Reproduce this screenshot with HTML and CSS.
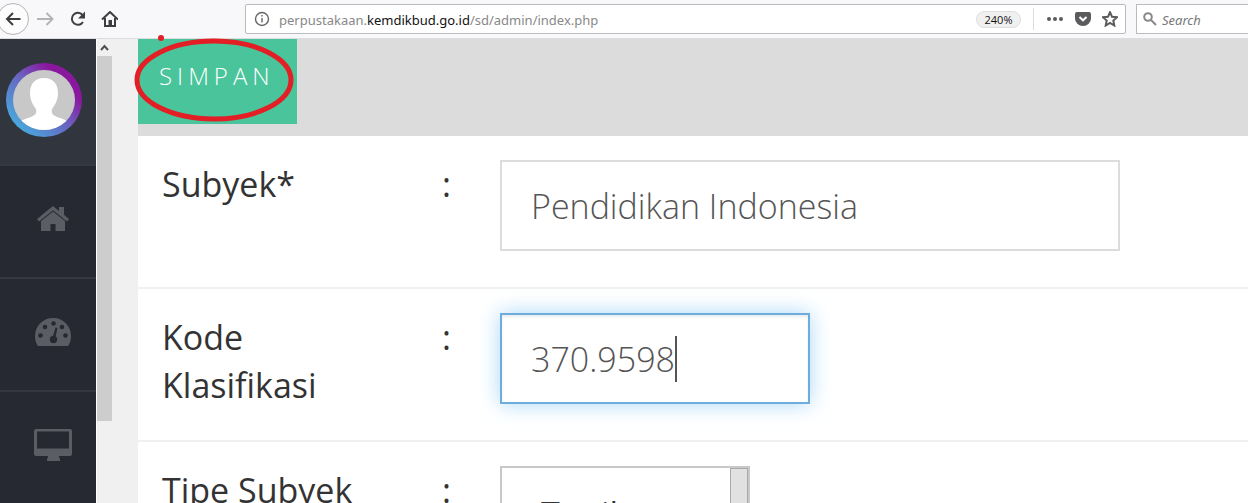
FILE: index.html
```html
<!DOCTYPE html>
<html lang="id">
<head>
<meta charset="utf-8">
<title>Perpustakaan – Subyek</title>
<link rel="stylesheet" href="styles.css">
</head>
<body>
<header class="browser">
  <nav class="nav-buttons" aria-label="Navigasi">
    <button class="nav-button back" aria-label="Back"><svg viewBox="0 0 16 16" width="16" height="16"><path d="M15.500 8H2M8 2L2 8l6 6"/></svg></button>
    <button class="nav-button forward" aria-label="Forward"><svg viewBox="0 0 18 16" width="18" height="16"><path d="M1 8h15M10.500 2l6 6-6 6"/></svg></button>
    <button class="nav-button" aria-label="Reload"><svg viewBox="0 0 16 16" width="16" height="16"><path d="M13.500 4A6 6 0 1 0 14 11"/><path class="solid" d="M16 0.500v7H9z"/></svg></button>
    <button class="nav-button" aria-label="Home"><svg viewBox="0 0 18 16" width="18" height="16"><path d="M2 8.500L10 1l8 7.500M5 7v8h10V7"/><path class="solid" d="M8.500 9h3.500v6H8.500z"/></svg></button>
  </nav>
  <div class="address">
    <svg class="info" viewBox="0 0 16 16" width="16" height="16"><circle cx="8" cy="8" r="6.500"/><path d="M8 7v4.500M8 4v1.600"/></svg>
    <div class="url" role="textbox" contenteditable="true" spellcheck="false" aria-label="Address">perpustakaan.<span class="domain">kemdikbud.go.id</span>/sd/admin/index.php</div>
    <button class="zoom-level">240%</button>
    <div class="page-actions">
      <button aria-label="Page actions"><svg viewBox="0 0 18 16" width="18" height="16"><circle cx="3" cy="8" r="2"/><circle cx="9" cy="8" r="2"/><circle cx="15" cy="8" r="2"/></svg></button>
      <button aria-label="Pocket"><svg viewBox="0 0 16 16" width="16" height="16"><path d="M2 1h12a2 2 0 0 1 2 2v4.500a8 7.500 0 0 1-16 0V3a2 2 0 0 1 2-2z"/><path class="notch" d="M4.500 6L8 9.300 11.500 6"/></svg></button>
      <button aria-label="Bookmark"><svg class="star" viewBox="0 0 16 16" width="16" height="16"><path d="M8 1.200l2 4.500 5 .5-3.700 3.300 1 5L8 12l-4.300 2.500 1-5L1 6.200l5-.5z"/></svg></button>
    </div>
  </div>
  <label class="search">
    <svg viewBox="0 0 14 14" width="14" height="14"><circle cx="5" cy="5" r="3.800"/><path d="M8 8l5 5"/></svg>
    <input type="search" placeholder="Search" aria-label="Search">
  </label>
</header>
<div class="page">
  <aside class="sidebar">
    <div class="profile">
      <div class="ring">
        <svg viewBox="0 0 62 60" width="62" height="60"><defs><clipPath id="face"><ellipse cx="31" cy="30" rx="31" ry="30"/></clipPath></defs><g clip-path="url(#face)"><path class="backdrop" d="M0 0h62v60H0z"/><path class="person" d="M31 8c10 0 14 7 14 15 0 7-3 12-6 16-1 5 1 6 5 8 6 2 9 3 11 5v12H7V52c2-2 5-3 11-5 4-2 6-3 5-8-3-4-6-9-6-16 0-8 4-15 14-15z"/></g></svg>
      </div>
    </div>
    <nav class="menu" aria-label="Menu">
      <a href="#" aria-label="Beranda"><svg viewBox="0 0 32 26" width="32" height="26"><path d="M16 5.500L4 15v10h9.500v-7h5v7H28V15z"/><path d="M16 0L0 13l2 2.500L16 4.300l14 11.200 2-2.500-5-4.200V1h-5v4z"/></svg></a>
      <a href="#" aria-label="Dasbor"><svg viewBox="0 0 36 28" width="36" height="28"><path d="M18 0a18 18 0 0 1 18 18q0 6-3 10H3Q0 24 0 18A18 18 0 0 1 18 0z"/><g class="cut"><circle cx="5.500" cy="17.500" r="2.300"/><circle cx="10" cy="9" r="2.300"/><circle cx="18.500" cy="5.500" r="2.300"/><circle cx="27" cy="9" r="2.300"/><circle cx="30.500" cy="17.500" r="2.300"/><circle cx="18.500" cy="21.500" r="3.700"/><path d="M17.500 20L20.500 9.500l2 .6L20 21z"/></g></svg></a>
      <a href="#" aria-label="Layar"><svg viewBox="0 0 38 32" width="38" height="32"><path fill-rule="evenodd" d="M2 0h34a2 2 0 0 1 2 2v23a2 2 0 0 1-2 2H25q0 2 1 3v2H13v-2q1-1 1-3H2a2 2 0 0 1-2-2V2a2 2 0 0 1 2-2zM3 2.500v17h32v-17z"/></svg></a>
    </nav>
  </aside>
  <div class="scrollbar">
    <svg viewBox="0 0 15 17" width="15" height="17"><path d="M4 11l3.500-4L11 11"/></svg>
    <div class="thumb"></div>
  </div>
  <main class="content">
    <div class="toolbar">
      <button class="save">SIMPAN</button>
      <svg class="marker" viewBox="0 0 160 88" width="160" height="88"><ellipse cx="79" cy="45" rx="77" ry="39"/><circle cx="26" cy="3" r="3"/></svg>
    </div>
    <form class="form">
      <div class="row">
        <label for="subject">Subyek*</label><span>:</span>
        <div class="field wide"><input id="subject" type="text" value="Pendidikan Indonesia"></div>
      </div>
      <div class="row">
        <label for="code">Kode Klasifikasi</label><span>:</span>
        <div class="field short active"><input id="code" type="text" value="370.9598"><i class="caret"></i></div>
      </div>
      <div class="row">
        <label for="type">Tipe Subyek</label><span>:</span>
        <div class="picker"><select id="type"><option>Topik</option></select><i class="handle"></i></div>
      </div>
    </form>
  </main>
</div>
</body>
</html>
```
FILE: styles.css
```css
* { box-sizing: border-box; }
body {
  margin: 0;
  height: 100vh;
  overflow: hidden;
  display: flex;
  flex-direction: column;
  font-family: "Open Sans", sans-serif;
  color: #333;
}
button { border: 0; padding: 0; background: none; font: inherit; color: inherit; }
input, select { font: inherit; color: inherit; border: 0; outline: 0; padding: 0; background: none; }
svg { display: block; flex: none; }

.browser {
  flex: none;
  display: flex;
  height: 39px;
  padding: 4px 0;
  background: #f8f8fb;
  border-bottom: 1px solid #ddd;
}
.nav-buttons { display: flex; align-items: center; width: 245px; flex: none; }
.nav-button {
  display: flex;
  align-items: center;
  justify-content: center;
  width: 32px;
  height: 32px;
  flex: none;
}
.nav-button svg { fill: none; stroke: #3e3e40; stroke-width: 2; }
.nav-button .solid { fill: #3e3e40; stroke: none; }
.back { margin-left: -3px; border: 1px solid #b5b5b8; border-radius: 50%; background: #fcfcfd; }
.nav-button.forward svg { stroke: #b4b4b6; }

.address {
  flex: 1;
  display: flex;
  align-items: center;
  border: 1px solid #bbb;
  border-radius: 2px;
  background: #fff;
  padding: 0 7px 0 8px;
}
.info { fill: none; stroke: #666; stroke-width: 1.4; }
.url { flex: 1; margin-left: 9px; padding-top: 2px; font: 13px "Noto Sans", sans-serif; color: #888; outline: 0; white-space: nowrap; }
.domain { color: #111; }
.zoom-level {
  width: 45px;
  height: 17px;
  border: 1px solid #ddd;
  border-radius: 9px;
  background: #f0f0f0;
  font-size: 11px;
  line-height: 15px;
  color: #111;
}
.page-actions {
  display: flex;
  align-items: center;
  gap: 11px;
  height: 22px;
  margin-left: 12px;
  padding-left: 12px;
  border-left: 1px solid #ddd;
}
.page-actions svg { fill: #5b5b5d; }
.page-actions .notch { fill: none; stroke: #fff; stroke-width: 2; }
.page-actions .star { fill: none; stroke: #5b5b5d; stroke-width: 2; }
.search {
  display: flex;
  align-items: center;
  gap: 5px;
  width: 112px;
  margin-left: 10px;
  padding-left: 6px;
  border: 1px solid #bbb;
  border-right: 0;
  background: #fff;
}
.search svg { fill: none; stroke: #888; stroke-width: 2; }
.search input { width: 80px; padding-top: 2px; font: italic 13px "Noto Sans", sans-serif; }
.search input::placeholder { color: #777; }

.page {
  flex: 1;
  min-height: 0;
  overflow: clip;
  overflow-clip-margin: 4px;
  display: flex;
  background: #f0f0f0;
}
.sidebar { width: 97px; flex: none; background: #262931; border-right: 1px solid #fff; }
.profile { height: 127px; padding: 24px 0 0 6px; background: #31353e; border-bottom: 2px solid #353841; }
.ring {
  display: grid;
  place-items: center;
  width: 76px;
  height: 74px;
  border-radius: 50%;
  background: linear-gradient(45deg, #44b0e0 10%, #6a62c0 50%, #8a189e 75%);
}
.backdrop { fill: #c8c8c8; }
.person { fill: #fff; }
.menu a {
  display: flex;
  align-items: center;
  justify-content: center;
  height: 113px;
  padding: 0 0 6px 10px;
  border-bottom: 2px solid #343740;
}
.menu svg { fill: #5a5d63; }
.menu .cut { fill: #262931; }

.scrollbar { width: 15px; flex: none; margin-right: 26px; }
.scrollbar svg { fill: none; stroke: #505050; stroke-width: 2; }
.thumb { height: 365px; background: #cdcdcd; }

.content { flex: 1; min-width: 0; background: #fff; }
.toolbar { position: relative; height: 97px; background: #dcdcdc; }
.save {
  height: 85px;
  padding: 0 22px 12px 21px;
  background: #4ac49b;
  color: #fff;
  font-size: 24px;
  font-weight: 300;
  letter-spacing: 5px;
}
.marker { position: absolute; left: -3px; top: -4px; fill: none; stroke: #e31e25; stroke-width: 5; overflow: visible; }
.marker circle { fill: #e31e25; stroke: none; }

.form { font-size: 34px; line-height: 48px; }
.row {
  display: grid;
  grid-template-columns: 220px 38px 1fr;
  align-items: start;
  column-gap: 40px;
  min-height: 153px;
  padding: 24px;
  border-bottom: 2px solid #f0f0f0;
}
.row > span { padding-left: 20px; }
.field {
  display: flex;
  align-items: center;
  height: 91px;
  padding: 0 29px;
  border: 2px solid #dcdcdc;
  font-weight: 300;
  color: #555;
}
.wide { max-width: 620px; }
.wide input { flex: 1; min-width: 0; }
.short { width: 310px; }
.short input { field-sizing: content; }
.active { border-color: #6eacdc; box-shadow: 0 0 20px #a9d8f8, inset 0 2px 3px #e8ecf0; }
.caret { width: 2px; height: 46px; background: #555; }
.picker { display: flex; width: 250px; height: 91px; border: 2px solid #c8c8c8; }
.picker select { flex: 1; min-width: 0; appearance: none; padding: 4px 0 0 39px; color: #333; }
.handle { width: 18px; border: 1px solid #aaa; background: #e1e1e1; }
```
